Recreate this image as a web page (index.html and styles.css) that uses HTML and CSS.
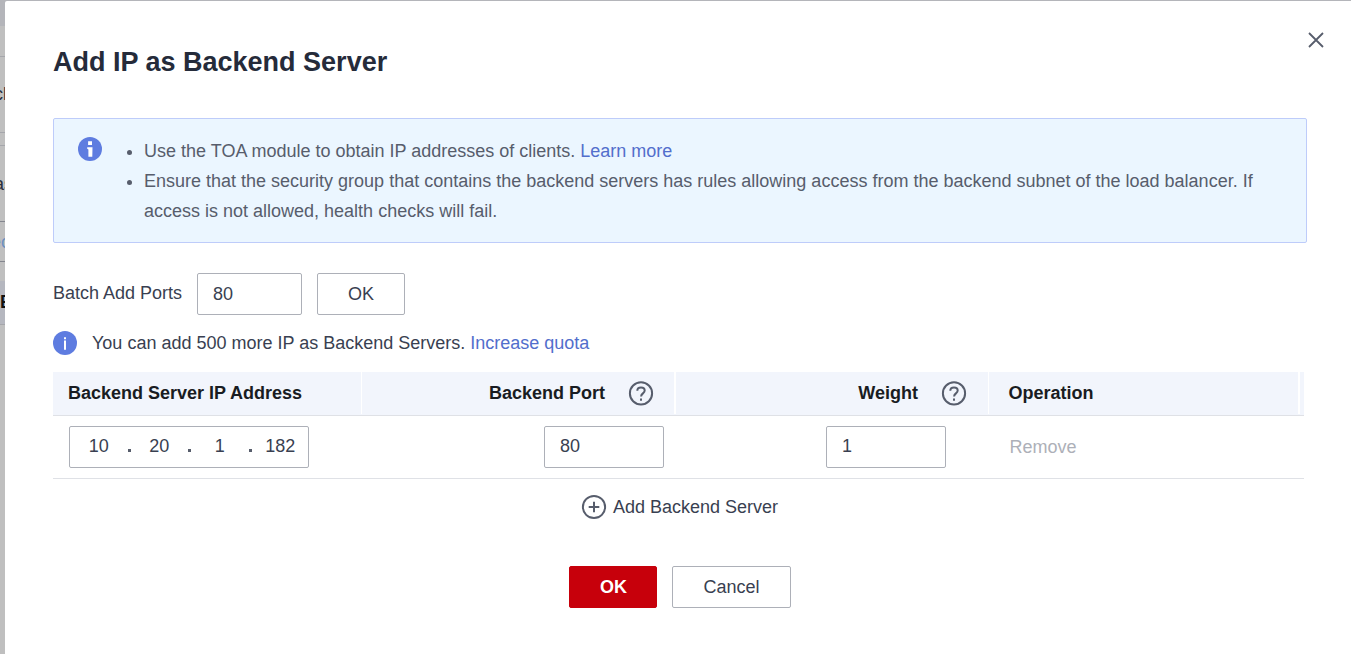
FILE: index.html
```html
<!DOCTYPE html>
<html lang="en">
<head>
<meta charset="utf-8">
<title>Add IP as Backend Server</title>
<link rel="stylesheet" href="styles.css">
</head>
<body>
<div class="page">
  <div class="backdrop">
    <div class="strip strip-top"></div>
    <div class="strip strip-tab"></div>
    <div class="strip strip-check"><span>ck</span></div>
    <div class="strip strip-gap"></div>
    <div class="strip strip-name"><span>as</span></div>
    <div class="strip strip-link"><span>ec</span></div>
    <div class="strip strip-space"></div>
    <div class="strip strip-head"><span>E</span></div>
    <div class="strip strip-rest"></div>
  </div>
  <main class="dialog">
    <header class="dialog-head">
      <h1 class="title">Add IP as Backend Server</h1>
      <svg class="close" width="16" height="16" viewBox="0 0 16 16"><path d="M1 1L15 15M15 1L1 15"/></svg>
    </header>
    <section class="notice">
      <svg class="notice-icon" width="24" height="24" viewBox="0 0 24 24"><circle cx="12" cy="12" r="12" fill="#5e7ce0"/><path d="M10.1 4.2h3.9V8h-3.9zM9.2 10.2h5.3l-.2 9.6h-3.9v-7.4l-1.2-.6z" fill="#fff"/></svg>
      <ul class="notice-list">
        <li>Use the TOA module to obtain IP addresses of clients. <a class="link">Learn more</a></li>
        <li>Ensure that the security group that contains the backend servers has rules allowing access from the backend subnet of the load balancer. If access is not allowed, health checks will fail.</li>
      </ul>
    </section>
    <div class="batch">
      <span class="batch-label">Batch Add Ports</span>
      <div class="field field-batch">80</div>
      <div class="btn btn-batch">OK</div>
    </div>
    <div class="quota">
      <svg width="24" height="24" viewBox="0 0 24 24"><circle cx="12" cy="12" r="12" fill="#5e7ce0"/><path d="M11 6.2h2v2h-2zM11 9.4h2v9.4h-2z" fill="#fff"/></svg>
      <span class="quota-text">You can add 500 more IP as Backend Servers. <a class="link">Increase quota</a></span>
    </div>
    <div class="table">
      <div class="row row-head">
        <div class="cell cell-ip">Backend Server IP Address</div>
        <div class="cell cell-port"><span>Backend Port</span><svg class="outline" width="26" height="26" viewBox="0 0 26 26"><circle cx="13" cy="13.4" r="11.1"/><path d="M9.3 10.8C9.3 8.6 10.9 7.4 13 7.4s3.7 1.2 3.7 3.2c0 2.7-3.6 2.9-3.6 5.8"/><path d="M13 18.6v2.2"/></svg></div>
        <div class="cell cell-weight"><span>Weight</span><svg class="outline" width="26" height="26" viewBox="0 0 26 26"><circle cx="13" cy="13.4" r="11.1"/><path d="M9.3 10.8C9.3 8.6 10.9 7.4 13 7.4s3.7 1.2 3.7 3.2c0 2.7-3.6 2.9-3.6 5.8"/><path d="M13 18.6v2.2"/></svg></div>
        <div class="cell cell-op">Operation</div>
        <div class="cell cell-end"></div>
      </div>
      <div class="row row-body">
        <div class="cell cell-ip"><div class="field field-ip"><span class="octet">10</span><i class="dot"></i><span class="octet">20</span><i class="dot"></i><span class="octet">1</span><i class="dot"></i><span class="octet">182</span></div></div>
        <div class="cell cell-port"><div class="field field-num">80</div></div>
        <div class="cell cell-weight"><div class="field field-num">1</div></div>
        <div class="cell cell-op">Remove</div>
      </div>
    </div>
    <div class="add">
      <svg class="outline" width="26" height="26" viewBox="0 0 26 26"><circle cx="13" cy="13" r="11.1"/><path d="M7.7 13h10.6M13 7.7v10.6"/></svg>
      <span>Add Backend Server</span>
    </div>
    <footer class="actions">
      <div class="btn btn-primary">OK</div>
      <div class="btn btn-cancel">Cancel</div>
    </footer>
  </main>
</div>
</body>
</html>
```

FILE: styles.css
```css
* { box-sizing: border-box; }
body { margin: 0; font: 18px/30px "Liberation Sans", Arial, sans-serif; color: #393f51; background: #b4b5ba; }
.page { display: flex; width: 1351px; height: 654px; overflow: hidden; }

.backdrop { width: 5px; flex: none; display: flex; flex-direction: column; overflow: hidden; background: #bfbfbf; }
.strip { flex: none; display: flex; align-items: center; justify-content: flex-end; white-space: nowrap; }
.strip span { flex: none; }
.strip-top { height: 26px; background: #b4b5ba; }
.strip-tab { height: 31px; border-bottom: 1px solid #a5a6ab; }
.strip-check { height: 76px; padding-bottom: 2px; border-bottom: 1px solid #a5a6ab; color: #2b303d; }
.strip-check span { margin-right: -7px; }
.strip-gap { height: 13px; border-bottom: 1px solid #a5a6ab; }
.strip-name { height: 76px; border-bottom: 1px solid #84868e; color: #2b303d; }
.strip-name span { margin-right: -8px; }
.strip-link { height: 40px; border-bottom: 1px solid #84868e; color: #6c8fbf; }
.strip-link span { margin-right: -5px; }
.strip-space { height: 19px; }
.strip-head { height: 44px; padding-bottom: 2px; border-bottom: 1px solid #a5a6ab; background: #b5b7bf; color: #111; font-weight: 700; }
.strip-head span { margin-right: -7px; }
.strip-rest { flex: 1; }

.dialog { width: 1346px; height: 653px; margin-top: 1px; padding: 0 44px 0 48px; background: #fff; border-radius: 2px 0 0 0; }
.dialog-head { display: flex; justify-content: space-between; height: 117px; padding-top: 31px; margin-right: -18px; }
.title { margin: 0; font-size: 27px; line-height: 60px; height: 60px; font-weight: 700; color: #252b3a; }
.close { fill: none; stroke: #575d6c; stroke-width: 1.8; margin-right: 1px; }

.notice { display: flex; width: 1254px; height: 125px; padding: 17px 24px 0; border: 1px solid #beccfa; border-radius: 2px; background: #ebf6ff; color: #575d6c; }
.notice-icon { flex: none; margin-top: 1px; }
.notice-list { margin: 0; padding-left: 42px; }
.link { color: #526ecc; }

.batch { display: flex; height: 42px; margin-top: 30px; }
.batch-label { width: 144px; line-height: 40px; }
.field, .btn { height: 42px; border: 1px solid #adb0b8; border-radius: 2px; background: #fff; line-height: 40px; }
.field { padding-left: 15px; }
.field-batch { width: 105px; margin-right: 15px; }
.btn { text-align: center; }
.btn-batch { width: 88px; }
.quota { display: flex; align-items: center; height: 30px; margin-top: 13px; }
.quota-text { margin-left: 15px; }

.table { width: 1251px; margin-top: 14px; }
.row { display: grid; grid-template-columns: 309px 314px 313px 311px 4px; }
.row-head { height: 44px; background: #f2f5fc; border-bottom: 1px solid #dfe1e6; color: #191c22; font-weight: 700; line-height: 42px; }
.row-body { height: 63px; align-items: center; border-bottom: 1px solid #dfe1e6; }
.cell-ip { padding-left: 15px; }
.row-head .cell { height: 42px; border-right: 2px solid #fff; }
.row-head .cell-ip, .row-head .cell-weight { border-right-width: 1px; }
.row-head .cell-end { border: 0; }
.cell-port, .cell-weight { display: flex; justify-content: flex-end; }
.row-head .cell-port, .row-head .cell-weight { padding-right: 20px; gap: 23px; }
.row-head .cell-weight { padding-right: 21px; }
.row-head .outline { margin-top: 8px; }
.row-body .cell-port { padding-right: 12px; }
.row-body .cell-weight { padding-right: 43px; }
.row-head .cell-op { padding-left: 19.5px; }
.row-body .cell-op { padding-left: 20.5px; color: #adb0b8; }
.field-num { width: 120px; line-height: 38px; }
.field-ip { display: flex; width: 240px; margin-left: 1px; padding-left: 0; line-height: 38px; }
.octet { width: 57.5px; text-align: center; flex: none; }
.dot { flex: none; width: 3px; height: 3px; margin-top: 22px; background: #575d6c; }

.outline { flex: none; fill: none; stroke: #575d6c; stroke-width: 2; }
.add { display: flex; align-items: center; gap: 6px; height: 30px; margin: 13px 0 0 528px; }
.actions { display: flex; gap: 15px; margin: 44px 0 0 516px; }
.btn-primary { width: 88px; padding-left: 1px; border-color: #c7000b; background: #c7000b; color: #fff; font-weight: 700; }
.btn-cancel { width: 119px; }
```
